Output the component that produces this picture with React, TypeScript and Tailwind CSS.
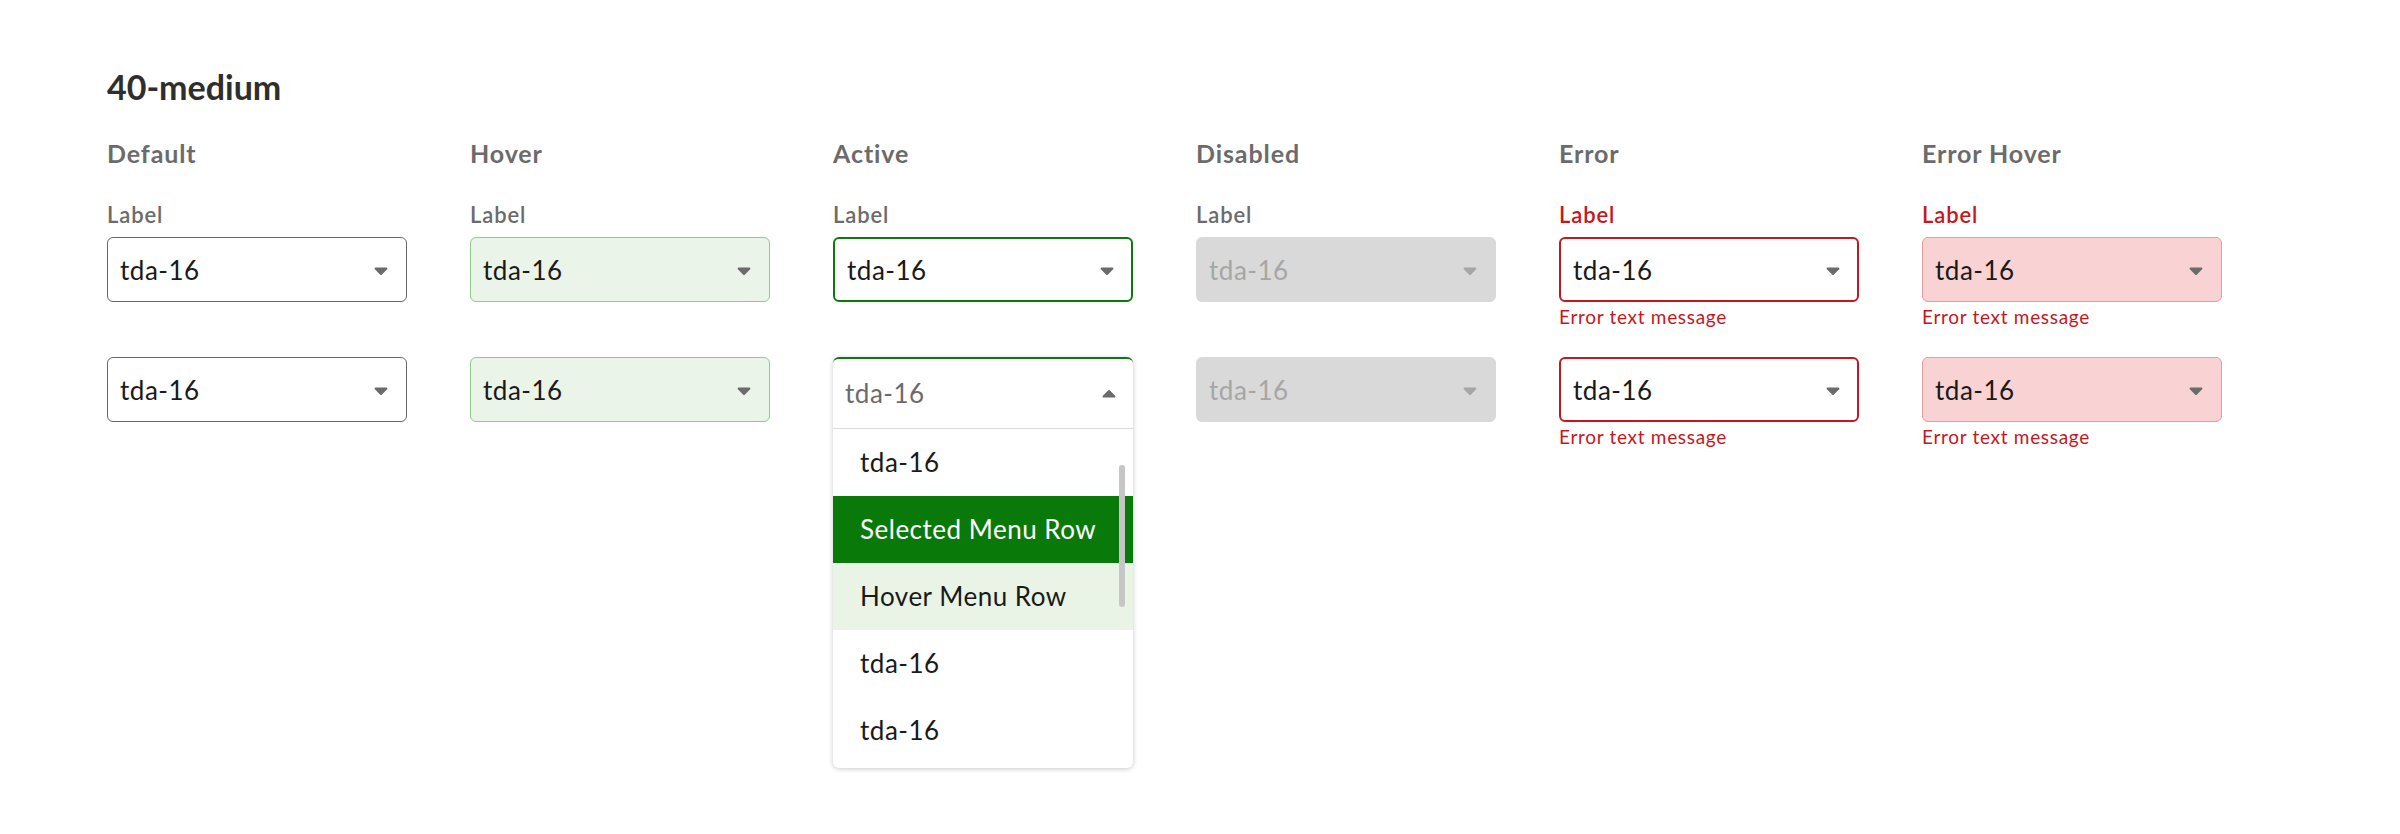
import React from "react"

type Variant = "default" | "hover" | "active" | "disabled" | "error" | "errorHover"

interface Column {
  title: string
  variant: Variant
  open?: boolean
}

const columns: Column[] = [
  { title: "Default", variant: "default" },
  { title: "Hover", variant: "hover" },
  { title: "Active", variant: "active", open: true },
  { title: "Disabled", variant: "disabled" },
  { title: "Error", variant: "error" },
  { title: "Error Hover", variant: "errorHover" },
]

const boxStyles: Record<Variant, string> = {
  default: "border border-[#666666] bg-white text-[#1a1a1a] pl-3 pr-[18px]",
  hover: "border border-[#8ecb8b] bg-[#eaf4e8] text-[#1a1a1a] pl-3 pr-[18px]",
  active: "border-2 border-[#0a7b0a] bg-white text-[#1a1a1a] pl-3 pr-[17px]",
  disabled: "border border-[#d9d9d9] bg-[#d9d9d9] text-[#a6a6a6] pl-3 pr-[18px]",
  error: "border-2 border-[#c8161d] bg-white text-[#1a1a1a] pl-3 pr-[17px]",
  errorHover: "border border-[#e89c9c] bg-[#f9d3d3] text-[#1a1a1a] pl-3 pr-[18px]",
}

function Caret({ up = false, color = "#6b6b6b" }: { up?: boolean; color?: string }) {
  return (
    <svg width="14" height="8" viewBox="0 0 14 8" className={up ? "rotate-180" : ""}>
      <path
        d="M1.6 0.5h10.8a1 1 0 0 1 .75 1.66l-5.4 5.5a1 1 0 0 1-1.5 0L.85 2.16A1 1 0 0 1 1.6.5z"
        fill={color}
      />
    </svg>
  )
}

function Select({ variant }: { variant: Variant }) {
  return (
    <div
      className={`h-[65px] w-[300px] rounded-md flex items-center justify-between ${boxStyles[variant]}`}
    >
      <span className="text-[26px] tracking-[0.5px] pt-[2px]">tda-16</span>
      <span className="pt-[3px]">
        <Caret color={variant === "disabled" ? "#a6a6a6" : "#6b6b6b"} />
      </span>
    </div>
  )
}

function OpenMenu() {
  const rows = ["tda-16", "Selected Menu Row", "Hover Menu Row", "tda-16", "tda-16"]
  return (
    <div className="relative w-[300px] rounded-md border-t-2 border-[#0a7b0a] bg-white shadow-[0_1px_5px_rgba(0,0,0,0.22)] pb-1">
      <div className="h-[70px] flex items-center justify-between pl-3 pr-[17px] border-b border-[#dadada]">
        <span className="text-[26px] tracking-[0.5px] text-[#6b6b6b]">tda-16</span>
        <Caret up />
      </div>
      {rows.map((row, i) => (
        <div
          key={i}
          className={`h-[67px] flex items-center pl-[27px] text-[26px] tracking-[0.5px] ${
            i === 1
              ? "bg-[#097a09] text-white"
              : i === 2
                ? "bg-[#e9f4e6] text-[#1a1a1a]"
                : "text-[#1a1a1a]"
          }`}
        >
          {row}
        </div>
      ))}
      <div className="absolute right-[8px] top-[106px] w-[6px] h-[142px] rounded-full bg-[#c6c6c6]" />
    </div>
  )
}

function ErrorSlot({ show }: { show: boolean }) {
  return (
    <div className="h-[55px] pt-[4px]">
      {show && (
        <p className="text-[19px] leading-[22px] tracking-[0.7px] text-[#c8161d]">
          Error text message
        </p>
      )}
    </div>
  )
}

export default function App() {
  return (
    <div
      className="min-h-screen bg-white pl-[107px] pt-[66px]"
      style={{ fontFamily: "Lato, 'Open Sans', sans-serif" }}
    >
      <h1 className="text-[34px] leading-[41px] font-bold text-[#2e2e2e]">40-medium</h1>

      <div className="flex gap-[63px] mt-[33px]">
        {columns.map((col) => {
          const isError = col.variant === "error" || col.variant === "errorHover"
          return (
            <div key={col.title} className="w-[300px] flex flex-col">
              <h2 className="text-[25px] leading-[26px] font-bold tracking-[0.9px] text-[#6b6b6b]">
                {col.title}
              </h2>
              <label
                className={`mt-[37px] text-[22px] leading-[24px] font-semibold tracking-[0.9px] ${
                  isError ? "text-[#c8161d]" : "text-[#6b6b6b]"
                }`}
              >
                Label
              </label>
              <div className="mt-[10px]">
                <Select variant={col.variant} />
              </div>
              <ErrorSlot show={isError} />
              {col.open ? <OpenMenu /> : <Select variant={col.variant} />}
              {!col.open && <ErrorSlot show={isError} />}
            </div>
          )
        })}
      </div>
    </div>
  )
}
